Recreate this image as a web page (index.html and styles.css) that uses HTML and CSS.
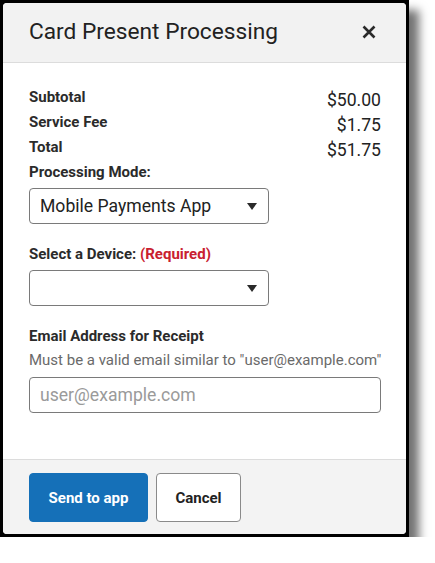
FILE: index.html
```html
<!DOCTYPE html>
<html lang="en">
<head>
<meta charset="utf-8">
<title>Card Present Processing</title>
<link rel="stylesheet" href="styles.css">
</head>
<body>
<div class="frame">
  <div class="dialog">
    <div class="header">
      <h1 class="title">Card Present Processing</h1>
      <button class="close" aria-label="Close">
        <svg width="14" height="14" viewBox="0 0 14 14"><path d="M1.5 1.5 L12.5 12.5 M12.5 1.5 L1.5 12.5" stroke="#2a2a2a" stroke-width="2.6" stroke-linecap="butt"/></svg>
      </button>
    </div>
    <div class="body">
      <div class="row"><span class="lbl">Subtotal</span><span class="val">$50.00</span></div>
      <div class="row"><span class="lbl">Service Fee</span><span class="val">$1.75</span></div>
      <div class="row"><span class="lbl">Total</span><span class="val">$51.75</span></div>
      <div class="label">Processing Mode:</div>
      <div class="select">
        <span class="select-text">Mobile Payments App</span>
        <svg class="arrow" width="10" height="7" viewBox="0 0 10 7"><path d="M0 0 H10 L5 7 Z" fill="#2a2a2a"/></svg>
      </div>
      <div class="label gap">Select a Device: <span class="req">(Required)</span></div>
      <div class="select">
        <span class="select-text"></span>
        <svg class="arrow" width="10" height="7" viewBox="0 0 10 7"><path d="M0 0 H10 L5 7 Z" fill="#2a2a2a"/></svg>
      </div>
      <div class="label gap">Email Address for Receipt</div>
      <div class="help">Must be a valid email similar to "user@example.com"</div>
      <input class="input" type="text" placeholder="user@example.com">
    </div>
    <div class="footer">
      <button class="btn primary">Send to app</button>
      <button class="btn secondary">Cancel</button>
    </div>
  </div>
</div>
</body>
</html>
```
FILE: styles.css
```css
* { box-sizing: border-box; }
html, body { margin: 0; padding: 0; background: #ffffff; }
body { font-family: Roboto, "Liberation Sans", Arial, sans-serif; color: #222; }

.frame {
  width: 409px;
  height: 537px;
  background: #000;
  padding: 3px;
  box-shadow: 10px 10px 9px rgba(0, 0, 0, 0.55);
}

.dialog {
  width: 403px;
  height: 531px;
  background: #fff;
  border-radius: 4px;
  display: flex;
  flex-direction: column;
  overflow: hidden;
}

.header {
  background: #f2f2f2;
  border-bottom: 1px solid #dcdcdc;
  height: 60px;
  padding: 15px 30px 0 26px;
  display: flex;
  justify-content: space-between;
  align-items: flex-start;
}

.title {
  margin: 0;
  font-size: 22.7px;
  line-height: 27px;
  font-weight: 400;
  color: #222;
}

.close {
  border: 0;
  background: transparent;
  padding: 0;
  margin-top: 7px;
  width: 14px;
  height: 14px;
  display: flex;
}

.body {
  flex: 1;
  padding: 25px 25px 0 26px;
}

.row {
  display: flex;
  justify-content: space-between;
  align-items: flex-start;
  height: 25px;
}

.lbl {
  font-size: 15px;
  line-height: 19px;
  font-weight: 700;
  color: #2b2b2b;
}

.val {
  font-size: 17.6px;
  line-height: 25px;
  color: #222;
}

.label {
  font-size: 15px;
  line-height: 19px;
  font-weight: 700;
  color: #2b2b2b;
}

.label.gap { margin-top: 21px; }

.req { color: #c9202f; }

.select {
  margin-top: 6px;
  width: 240px;
  height: 36px;
  border: 1px solid #7a7a7a;
  border-radius: 4px;
  display: flex;
  align-items: center;
  justify-content: space-between;
  padding: 0 11px 0 10px;
}

.select-text {
  font-size: 17.6px;
  color: #222;
  line-height: 22px;
}

.help {
  margin-top: 4px;
  font-size: 15px;
  line-height: 20px;
  color: #6a6a6a;
  white-space: nowrap;
}

.input {
  display: block;
  margin-top: 7px;
  width: 352px;
  height: 36px;
  border: 1px solid #7a7a7a;
  border-radius: 4px;
  padding: 0 10px;
  font-family: Roboto, "Liberation Sans", Arial, sans-serif;
  font-size: 17.6px;
  color: #222;
  background: #fff;
}

.input::placeholder { color: #9a9a9a; }

.footer {
  height: 75px;
  background: #f3f3f3;
  border-top: 1px solid #dcdcdc;
  padding: 13px 26px 0 26px;
  display: flex;
  align-items: flex-start;
  gap: 8px;
}

.btn {
  height: 49px;
  border-radius: 4px;
  font-family: Roboto, "Liberation Sans", Arial, sans-serif;
  font-size: 15px;
  font-weight: 700;
  padding: 0;
  white-space: nowrap;
}

.primary {
  width: 119px;
  background: #1570b8;
  border: 1px solid #1570b8;
  color: #fff;
}

.secondary {
  width: 85px;
  background: #fff;
  border: 1px solid #8a8a8a;
  color: #222;
}
```
